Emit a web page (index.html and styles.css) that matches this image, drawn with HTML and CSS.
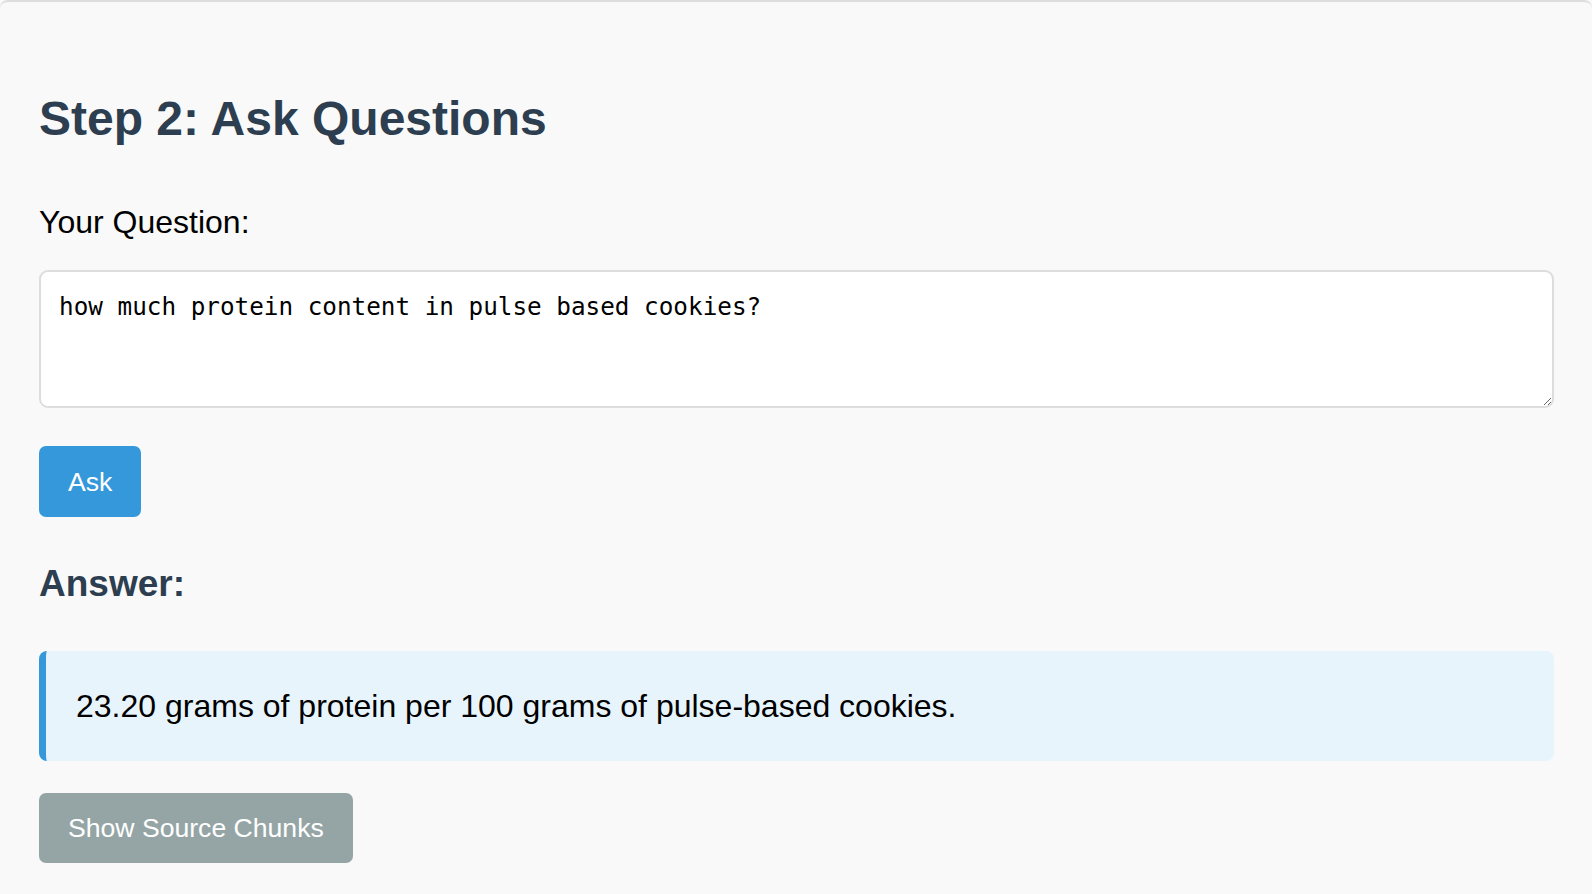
FILE: index.html
```html
<!DOCTYPE html>
<html lang="en">
<head>
<meta charset="utf-8">
<title>Step 2: Ask Questions</title>
<link rel="stylesheet" href="styles.css">
</head>
<body>
<section class="card">
  <h2 class="title">Step 2: Ask Questions</h2>
  <label class="label" for="q">Your Question:</label>
  <textarea id="q" class="question">how much protein content in pulse based cookies?</textarea>
  <div class="actions">
    <button class="btn btn-primary">Ask</button>
  </div>
  <h3 class="answer-title">Answer:</h3>
  <div class="answer">23.20 grams of protein per 100 grams of pulse-based cookies.</div>
  <div class="actions">
    <button class="btn btn-secondary">Show Source Chunks</button>
  </div>
</section>
</body>
</html>
```

FILE: styles.css
```css
* { box-sizing: border-box; }
html, body {
  margin: 0;
  padding: 0;
  background: #f9f9f9;
  font-family: "Liberation Sans", Arial, sans-serif;
  color: #000;
}
.card {
  display: flex;
  flex-direction: column;
  align-items: stretch;
  min-height: 894px;
  border-top: 2px solid #dddddd;
  border-radius: 8px;
  background: #f9f9f9;
  padding: 89px 38px 40px 39px;
}
.title {
  margin: 0;
  font-size: 48px;
  font-weight: 700;
  line-height: 55px;
  color: #2c3e50;
}
.label {
  margin-top: 58px;
  font-size: 32px;
  line-height: 36px;
  color: #000;
}
.question {
  margin-top: 30px;
  height: 138px;
  width: 100%;
  border: 2px solid #dddddd;
  border-radius: 9px;
  background: #fff;
  padding: 21px 18px;
  font-family: "DejaVu Sans Mono", "Liberation Mono", monospace;
  font-size: 24.3px;
  line-height: 28px;
  color: #000;
  resize: vertical;
}
.actions {
  display: flex;
}
.btn {
  border: none;
  border-radius: 7px;
  color: #fff;
  font-family: "Liberation Sans", Arial, sans-serif;
  font-size: 26.6px;
  line-height: 30px;
  padding: 20px 29px;
  cursor: pointer;
}
.btn-primary {
  margin-top: 38px;
  background: #3498db;
  height: 71px;
}
.btn-secondary {
  margin-top: 32px;
  background: #95a5a6;
  height: 70px;
}
.answer-title {
  margin: 46px 0 0;
  font-size: 37px;
  font-weight: 700;
  line-height: 41px;
  color: #2c3e50;
}
.answer {
  margin-top: 47px;
  background: #e8f4fc;
  border-left: 7px solid #3498db;
  border-radius: 8px;
  padding: 30px 30px;
  font-size: 32px;
  line-height: 50px;
  color: #000;
}
```
